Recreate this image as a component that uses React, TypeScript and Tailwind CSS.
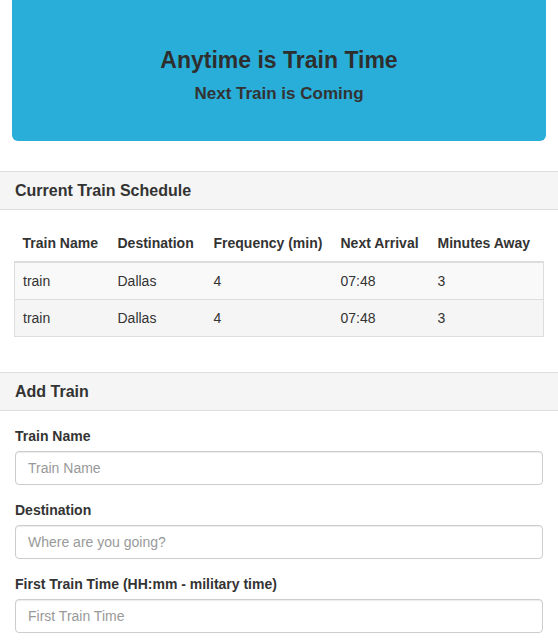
export default function App() {
  const rows = [
    { name: "train", dest: "Dallas", freq: "4", next: "07:48", away: "3" },
    { name: "train", dest: "Dallas", freq: "4", next: "07:48", away: "3" },
  ]

  return (
    <div className="min-h-[642px] bg-white text-[14px] leading-[20px] text-[#333]" style={{ fontFamily: '"Liberation Sans", Arial, sans-serif' }}>
      {/* Jumbotron */}
      <div className="mx-[12px] flex h-[141px] flex-col items-center justify-center rounded-b-[6px] bg-[#29aed9] pt-[9px]">
        <h1 className="text-[23px] font-bold leading-[30px] text-[#2e2e2e]">Anytime is Train Time</h1>
        <h2 className="mt-[8px] text-[17px] font-bold leading-[22px] text-[#333]">Next Train is Coming</h2>
      </div>

      {/* Schedule panel */}
      <div className="mt-[30px]">
        <div className="border-y border-[#ddd] bg-[#f5f5f5] px-[15px] py-[9px]">
          <h3 className="text-[16px] font-bold leading-[19px]">Current Train Schedule</h3>
        </div>
        <div className="px-[14px] py-[15px]">
          <table className="w-full border-collapse">
            <thead>
              <tr className="border-b-2 border-[#ddd] text-left">
                <th className="w-[95px] p-[8px]">Train Name</th>
                <th className="w-[96px] p-[8px]">Destination</th>
                <th className="w-[127px] p-[8px]">Frequency (min)</th>
                <th className="w-[97px] p-[8px]">Next Arrival</th>
                <th className="p-[8px]">Minutes Away</th>
              </tr>
            </thead>
            <tbody>
              {rows.map((r, i) => (
                <tr key={i} className={`border border-[#ddd] ${i % 2 === 0 ? "bg-[#f9f9f9]" : "bg-[#f5f5f5]"}`}>
                  <td className="p-[8px]">{r.name}</td>
                  <td className="p-[8px]">{r.dest}</td>
                  <td className="p-[8px]">{r.freq}</td>
                  <td className="p-[8px]">{r.next}</td>
                  <td className="p-[8px]">{r.away}</td>
                </tr>
              ))}
            </tbody>
          </table>
        </div>
      </div>

      {/* Add train panel */}
      <div className="mt-[20px]">
        <div className="border-y border-[#ddd] bg-[#f5f5f5] px-[15px] py-[9px]">
          <h3 className="text-[16px] font-bold leading-[19px]">Add Train</h3>
        </div>
        <form className="flex flex-col gap-[15px] p-[15px]">
          {[
            ["Train Name", "Train Name"],
            ["Destination", "Where are you going?"],
            ["First Train Time (HH:mm - military time)", "First Train Time"],
          ].map(([label, ph]) => (
            <div key={label} className="flex flex-col">
              <label className="mb-[5px] font-bold">{label}</label>
              <input
                type="text"
                placeholder={ph}
                className="h-[34px] w-full rounded-[4px] border border-[#ccc] px-[12px] text-[14px] placeholder:text-[#999] shadow-[inset_0_1px_1px_rgba(0,0,0,0.075)]"
              />
            </div>
          ))}
        </form>
      </div>
    </div>
  )
}
